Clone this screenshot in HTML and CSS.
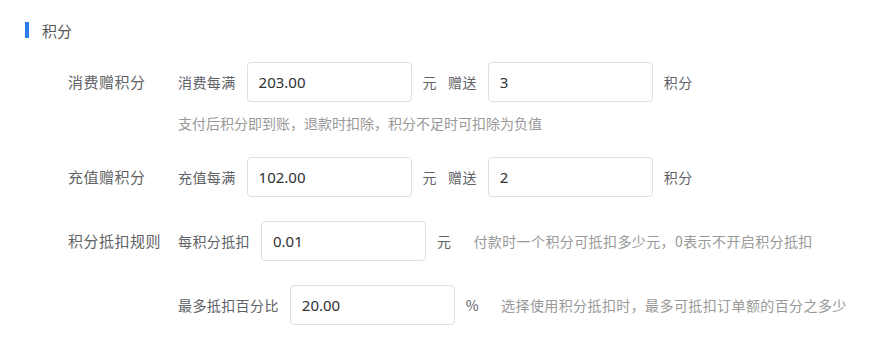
FILE: index.html
```html
<!DOCTYPE html>
<html lang="zh-CN">
<head>
    <meta charset="UTF-8">
    <title>积分设置</title>
    <link rel="stylesheet" href="styles.css">
</head>
<body>

<div class="panel">
    <div class="section-title">积分</div>

    <div class="form">
        <div class="form-item">
            <label class="item-label">消费赠积分</label>
            <div class="item-content">
                <div class="inline-row">
                    <span class="pre">消费每满</span>
                    <input class="input" type="text" value="203.00">
                    <span class="unit">元</span>
                    <span class="pre">赠送</span>
                    <input class="input" type="text" value="3">
                    <span class="unit">积分</span>
                </div>
                <div class="hint">支付后积分即到账，退款时扣除，积分不足时可扣除为负值</div>
            </div>
        </div>

        <div class="form-item">
            <label class="item-label">充值赠积分</label>
            <div class="item-content">
                <div class="inline-row">
                    <span class="pre">充值每满</span>
                    <input class="input" type="text" value="102.00">
                    <span class="unit">元</span>
                    <span class="pre">赠送</span>
                    <input class="input" type="text" value="2">
                    <span class="unit">积分</span>
                </div>
            </div>
        </div>

        <div class="form-item">
            <label class="item-label">积分抵扣规则</label>
            <div class="item-content">
                <div class="inline-row">
                    <span class="pre">每积分抵扣</span>
                    <input class="input" type="text" value="0.01">
                    <span class="unit">元</span>
                    <span class="tip">付款时一个积分可抵扣多少元，0表示不开启积分抵扣</span>
                </div>
            </div>
        </div>

        <div class="form-item">
            <label class="item-label"></label>
            <div class="item-content">
                <div class="inline-row">
                    <span class="pre">最多抵扣百分比</span>
                    <input class="input" type="text" value="20.00">
                    <span class="unit">%</span>
                    <span class="tip">选择使用积分抵扣时，最多可抵扣订单额的百分之多少</span>
                </div>
            </div>
        </div>
    </div>
</div>

</body>
</html>
```

FILE: styles.css
```css
body {
    margin: 0;
    background-color: #fff;
    font-family: "Noto Sans CJK SC", "Noto Sans", sans-serif;
    color: #606266;
}
.panel {
    padding: 20px 25px 0 25px;
}
.section-title {
    display: flex;
    align-items: center;
    height: 20px;
    font-size: 15px;
    color: #555;
}
.section-title::before {
    content: "";
    display: block;
    width: 4px;
    height: 16px;
    background-color: #2b7de9;
    margin-right: 13px;
}
.form {
    margin-top: 22px;
}
.form-item {
    display: flex;
    margin-bottom: 24px;
}
.item-label {
    width: 110px;
    flex-shrink: 0;
    padding-left: 43px;
    height: 40px;
    line-height: 40px;
    font-size: 15px;
    letter-spacing: 0.5px;
    color: #606266;
}
.inline-row {
    display: flex;
    align-items: center;
    gap: 11px;
    height: 40px;
    font-size: 14px;
}
.pre, .unit {
    color: #606266;
    letter-spacing: 0.4px;
}
.input {
    width: 165px;
    height: 40px;
    box-sizing: border-box;
    border: 1px solid #dcdfe6;
    border-radius: 4px;
    padding: 0 11px;
    font-family: "Noto Sans", "Noto Sans CJK SC", sans-serif;
    font-size: 15px;
    color: #303133;
    outline: none;
}
.tip {
    margin-left: 11px;
    letter-spacing: 0.4px;
    color: #999;
}
.hint {
    margin-top: 11px;
    line-height: 20px;
    font-size: 14px;
    color: #999;
}
```
